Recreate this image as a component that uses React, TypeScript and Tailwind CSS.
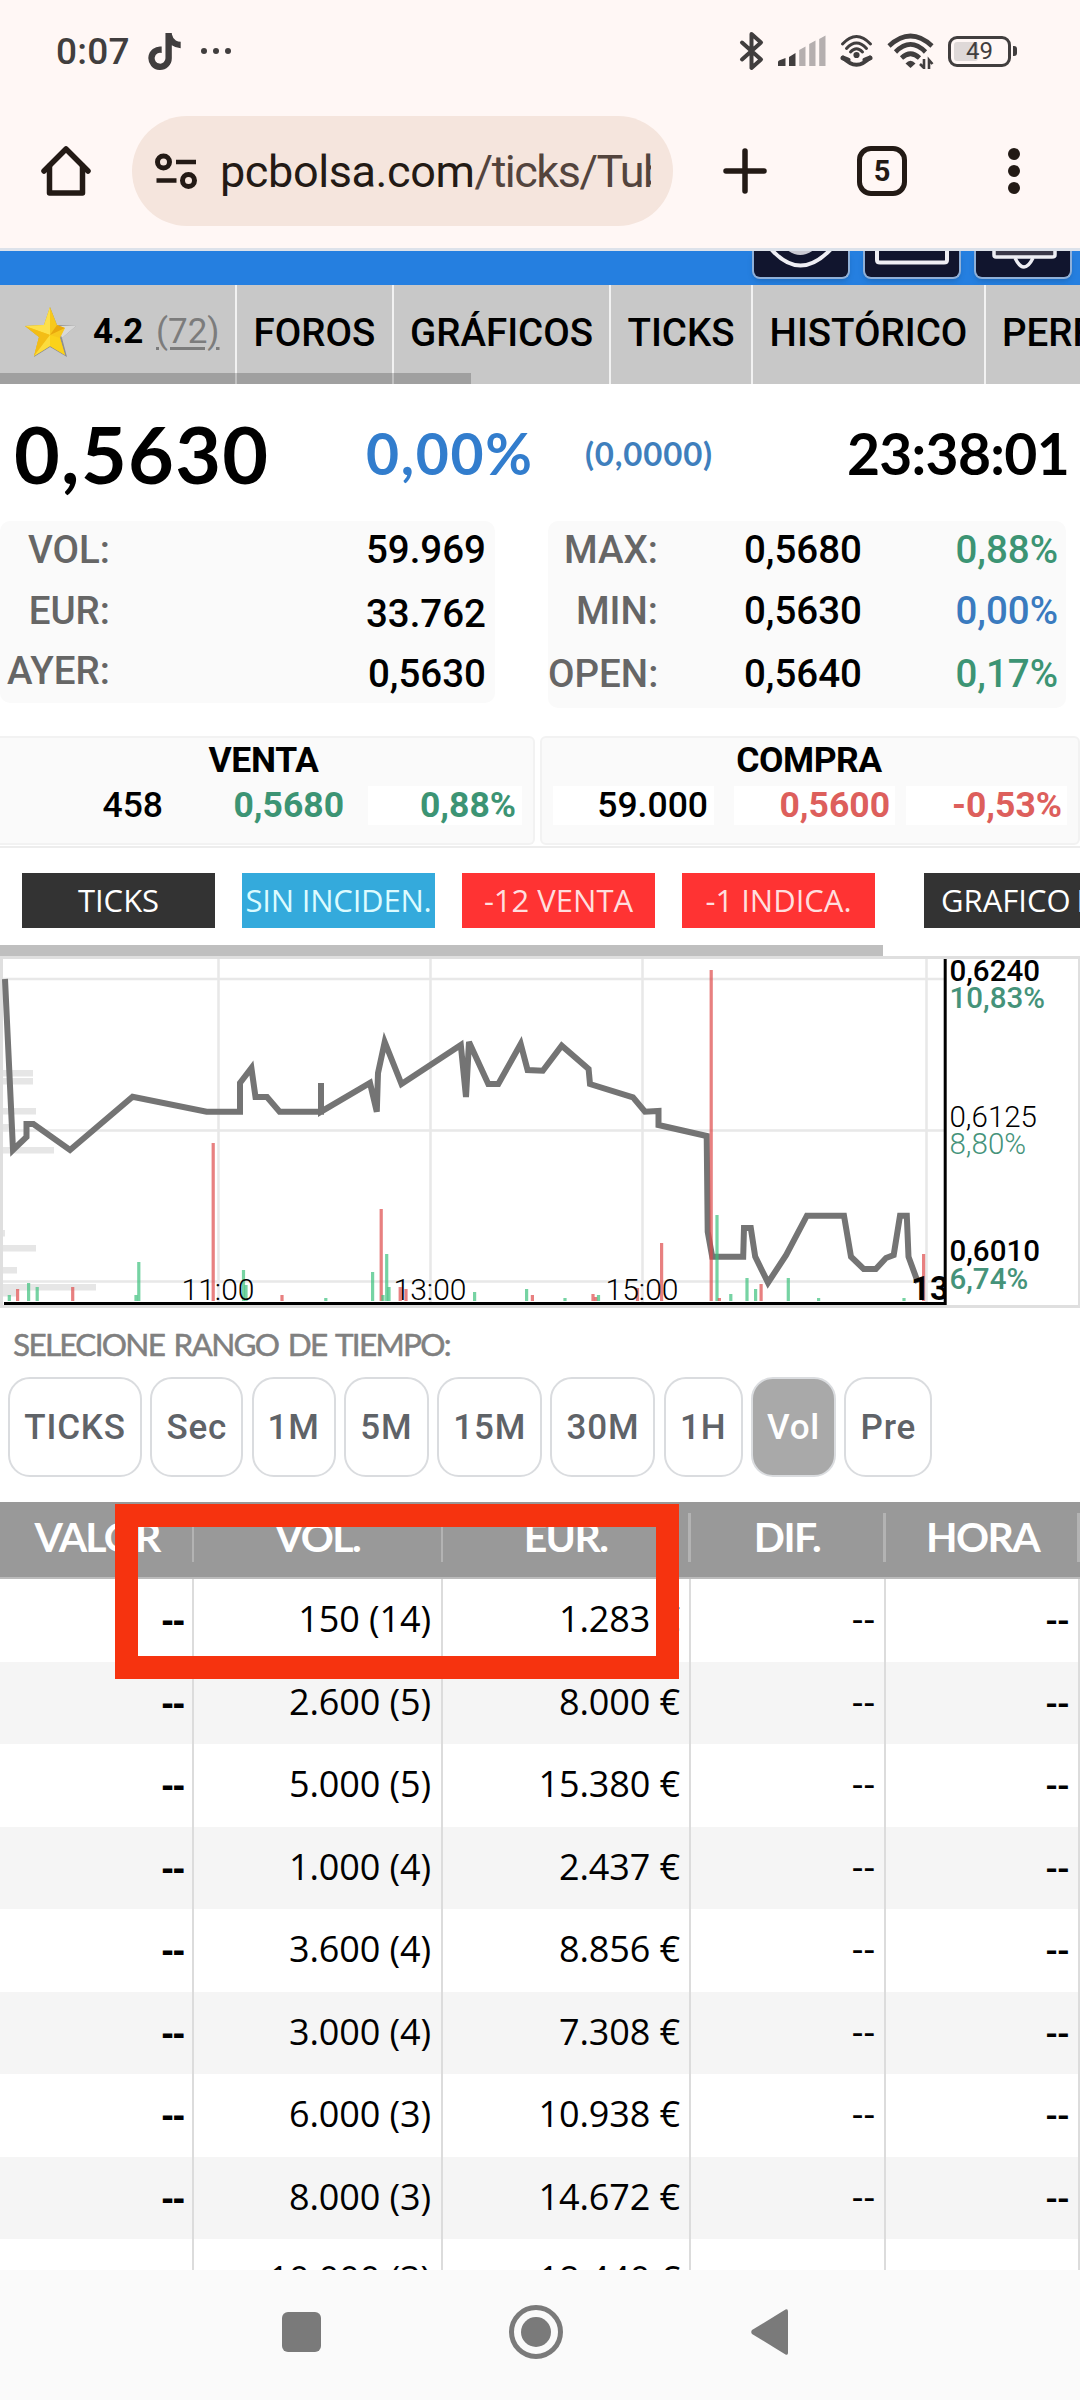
import { FaTiktok } from 'react-icons/fa6';
import clsx from 'clsx';

interface Bar {
  x: number;
  top: number;
  up: boolean;
}

interface QuoteRow {
  vol: string;
  eur: string;
}

const rows: QuoteRow[] = [
  { vol: '150 (14)', eur: '1.283 €' },
  { vol: '2.600 (5)', eur: '8.000 €' },
  { vol: '5.000 (5)', eur: '15.380 €' },
  { vol: '1.000 (4)', eur: '2.437 €' },
  { vol: '3.600 (4)', eur: '8.856 €' },
  { vol: '3.000 (4)', eur: '7.308 €' },
  { vol: '6.000 (3)', eur: '10.938 €' },
  { vol: '8.000 (3)', eur: '14.672 €' },
  { vol: '10.000 (3)', eur: '18.440 €' },
];

const ranges = [
  { label: 'TICKS', width: 'w-[134px]' },
  { label: 'Sec', width: 'w-[93px]' },
  { label: '1M', width: 'w-[84px]' },
  { label: '5M', width: 'w-[85px]' },
  { label: '15M', width: 'w-[105px]' },
  { label: '30M', width: 'w-[105px]' },
  { label: '1H', width: 'w-[79px]' },
  { label: 'Vol', width: 'w-[85px]', active: true },
  { label: 'Pre', width: 'w-[88px]' },
];

// Coordinates are relative to the chart's top-left corner
const pricePoints =
  '5,23 13,194 26.5,181 26.5,168 33.4,168 70,194 132.6,140.7 206.6,155.7 240,155.7 240,127 251.4,112 255.5,141 267,141 279.6,155.7 321,155.7 321,127 321,155.7 370,127 376.8,155.7 378,117 384.7,86 401.5,128 460.8,89 466,141 469,86 488.3,128 498.3,128 520.7,88 527.6,114 542.8,114.7 561.7,89.7 588.6,113 590,128 633,141.3 645,155.7 658.5,155 658.5,169 706.7,180 707.7,275.7 712.2,300.7 743.2,300.7 744,272 750.8,272 755.2,300.7 768,326.7 786.2,299 806.9,259.7 844,259.7 851,300.7 863.7,313 875.8,313 886,302 893.7,299 900,259.7 906.8,259.7 908.5,300.7 918,326.7';

const bars: Bar[] = [
  { x: 9.3, top: 339, up: true },
  { x: 17.6, top: 333, up: false },
  { x: 28.6, top: 327, up: true },
  { x: 37.2, top: 331, up: true },
  { x: 72.7, top: 331, up: false },
  { x: 136, top: 339, up: true },
  { x: 138.8, top: 306, up: true },
  { x: 213.2, top: 187, up: false },
  { x: 243.5, top: 314, up: true },
  { x: 246, top: 329, up: true },
  { x: 282, top: 339, up: false },
  { x: 325.8, top: 342, up: true },
  { x: 372.6, top: 316, up: true },
  { x: 381.2, top: 253, up: false },
  { x: 383, top: 339, up: true },
  { x: 386.7, top: 298, up: true },
  { x: 389, top: 331, up: true },
  { x: 400.2, top: 331, up: false },
  { x: 406, top: 333, up: false },
  { x: 474.6, top: 336, up: true },
  { x: 526.6, top: 333, up: true },
  { x: 532.4, top: 339, up: false },
  { x: 565, top: 342, up: true },
  { x: 593, top: 338, up: false },
  { x: 595.8, top: 341, up: false },
  { x: 598.5, top: 339, up: true },
  { x: 637.5, top: 332, up: false },
  { x: 661.6, top: 287, up: false },
  { x: 711.2, top: 14, up: false },
  { x: 717, top: 259, up: true },
  { x: 719.4, top: 342, up: false },
  { x: 730.8, top: 338, up: true },
  { x: 747, top: 322, up: true },
  { x: 755.6, top: 333, up: true },
  { x: 761.1, top: 328, up: false },
  { x: 788.3, top: 322, up: true },
  { x: 818.6, top: 342, up: true },
  { x: 904, top: 342, up: true },
  { x: 923.6, top: 298, up: false },
];

const volumeProfile = [
  [114, 33],
  [122, 33],
  [152, 36],
  [168, 14],
  [191, 54],
  [274, 5],
  [289, 36],
  [311, 17],
  [328, 96],
  [334, 16],
];

const StatusBar = () => (
  <div className="flex h-[102px] shrink-0 items-center pl-[56px] text-[#413e3e]">
    <span className="text-[37px] leading-[37px] font-medium tracking-[0.2px] w-[92px] pt-px">0:07</span>
    <FaTiktok className="w-[33px] h-[37px]" />
    <div className="ml-[20px] flex gap-[6px]">
      <i className="size-[6px] rounded-full bg-current" />
      <i className="size-[6px] rounded-full bg-current" />
      <i className="size-[6px] rounded-full bg-current" />
    </div>
    <svg className="ml-[508px]" width="26" height="40" viewBox="0 0 26 40" fill="none" stroke="currentColor" strokeWidth="4" strokeLinecap="round" strokeLinejoin="round">
      <path d="M3 11.5 L22 28.5 L12.5 37 V3 L22 11.5 L3 28.5" />
    </svg>
    <svg className="ml-[13px]" width="50" height="32" viewBox="0 0 50 32" fill="currentColor">
      <path d="M0 31 V27 Q0 26 1 25.5 L7.5 23 V31Z" />
      <path d="M11 31 V22 L17.5 18 V31Z" />
      <g fill="#b5afaf">
        <path d="M21.2 31 V15 L27.5 11.5 V31Z" />
        <path d="M31.2 31 V9 L37.5 5.5 V31Z" />
        <path d="M41.2 31 V4 L47.5 0.5 V31Z" />
      </g>
    </svg>
    <svg className="ml-[12px]" width="34" height="34" viewBox="0 0 34 34" fill="none" stroke="currentColor" strokeWidth="3" strokeLinecap="round">
      <path d="M2.5 10 Q16.500 -5 30.500 10" />
      <path d="M6.500 14.500 Q16.500 3.500 26.500 14.500" />
      <path d="M10.500 18 Q16.500 11.500 22.500 18" />
      <circle cx="16.500" cy="21" r="1.600" fill="currentColor" />
      <path d="M3 23.500 Q16.500 38 30 23.500" strokeWidth="4" />
      <path d="M3 24 L8 26 M30 24 L25 26" strokeWidth="5" />
    </svg>
    <svg className="ml-[13px]" width="48" height="36" viewBox="0 0 48 36" fill="none" stroke="currentColor" strokeWidth="4.600">
      <path d="M2 13 Q23.500 -7 45 13" />
      <path d="M8.500 19 Q23.500 4 38.500 19" />
      <path d="M14.500 25 Q23.500 16.500 32.500 25" />
      <path d="M18.500 30.500 Q23.500 25 28.500 30.500 L23.500 35Z" fill="currentColor" stroke="none" />
      <path d="M37 26 V35 L33 31 M42 36 V27 L45.500 31" strokeWidth="2.600" />
    </svg>
    <div className="relative ml-[13px] flex h-[31px] w-[63px] items-center justify-center rounded-[9px] border-[3px] border-current">
      <i className="absolute left-[3px] top-[3px] h-[19px] w-[24px] rounded-[3px] bg-[#dfd9d8]" />
      <span className="relative text-[24px] leading-[24px]">49</span>
    </div>
    <i className="ml-[2px] h-[10px] w-[4px] rounded-r-[3px] bg-current" />
  </div>
);

const BrowserBar = () => (
  <div className="flex h-[146px] shrink-0 items-start pl-[41px] pt-[14px] text-[#231a15]">
    <div className="flex h-[110px] items-center">
      <svg width="50" height="52" viewBox="0 0 50 52" fill="none" stroke="currentColor" strokeWidth="5.500" strokeLinecap="round" strokeLinejoin="round">
        <path d="M3 26 L25 4 L47 26" />
        <path d="M8.500 21 V48 H41.500 V21" />
      </svg>
      <div className="ml-[41px] flex h-[110px] w-[541px] items-center rounded-full bg-[#f5e5dd] pl-[23px] pr-[22px]">
        <svg width="43" height="38" viewBox="0 0 43 38" fill="none" stroke="currentColor" strokeWidth="5">
          <circle cx="8.500" cy="10" r="6" />
          <path d="M21 10 H41 M1.500 28.500 H21.500" strokeWidth="4.500" />
          <circle cx="33.500" cy="28.500" r="6" />
        </svg>
        <div className="ml-[22px] min-w-0 flex-1 overflow-hidden whitespace-nowrap pt-px text-[45px] leading-[60px] tracking-[-1.500px] text-[#53443d]">
          <span className="tracking-[-0.400px] text-[#231a15]">pcbolsa.com</span>/ticks/Tubos
        </div>
      </div>
      <svg className="ml-[50px]" width="44" height="46" viewBox="0 0 44 46" stroke="currentColor" strokeWidth="5.500" strokeLinecap="round">
        <path d="M22 3 V43 M3 23 H41" />
      </svg>
      <div className="ml-[90px] flex size-[50px] items-center justify-center rounded-[14px] border-[5.5px] border-current text-[29px] font-bold leading-none">5</div>
      <div className="ml-[101px] flex flex-col gap-[5px]">
        <i className="size-[12px] rounded-full bg-current" />
        <i className="size-[12px] rounded-full bg-current" />
        <i className="size-[12px] rounded-full bg-current" />
      </div>
    </div>
  </div>
);

const SiteHeader = () => (
  <div className="flex h-[37px] shrink-0 gap-[13px] overflow-hidden border-t-[3px] border-[#dde2ea] bg-[#257fe0] pl-[752px]">
    <div className="h-[28px] w-[98px] shrink-0 rounded-b-[8px] border-2 border-t-0 border-[#8fb0d8] bg-[#11152e] shadow-md">
      <svg width="94" height="26" viewBox="0 0 94 26" fill="none" stroke="#eeeef4" strokeWidth="4">
        <path d="M17 -2 Q46 31 77 -2" />
        <path d="M34 -3 Q46 7 59 -3" stroke="#c9c9d2" strokeWidth="4" />
      </svg>
    </div>
    <div className="h-[28px] w-[98px] shrink-0 rounded-b-[8px] border-2 border-t-0 border-[#8fb0d8] bg-[#11152e] shadow-md">
      <svg width="94" height="26" viewBox="0 0 94 26" fill="none" stroke="#eeeef4" strokeWidth="4">
        <path d="M12 -4 V9 Q12 11.500 15 11.500 H79 Q82 11.500 82 9 V-4" />
      </svg>
    </div>
    <div className="h-[28px] w-[98px] shrink-0 rounded-b-[8px] border-2 border-t-0 border-[#8fb0d8] bg-[#11152e] shadow-md">
      <svg width="94" height="26" viewBox="0 0 94 26" fill="none" stroke="#eeeef4" strokeWidth="3.500">
        <path d="M18 -4 V4 Q18 6 20 6 H76 Q79 6 79 4 V-4" fill="#3a3848" />
        <path d="M39 7 Q48 25 57 7" />
      </svg>
    </div>
  </div>
);

const Star = () => (
  <svg className="ml-[24px]" width="53" height="52" viewBox="0 0 53 52">
    <path d="M26 1 L33 19 L52 20 L38 32 L43 51 L26 41 L10 51 L15 31 L1 20 L20 19Z" fill="#8f8f8f" />
    <path d="M33 20 L52 20 L38 32Z" fill="#d8d8d8" />
    <path d="M26 1 L33 19 L41 22 L36 32 L41 49 L26 40 L10 50 L15 31 L1 20 L20 19Z" fill="#f7c81c" />
    <path d="M26 1 V29 L1 20 L20 19Z" fill="#fde04a" />
    <path d="M26 29 L10 50 L15 31 L1 20Z" fill="#f3bd16" />
    <path d="M26 29 L10 50 L26 40Z" fill="#fcdc3d" />
    <path d="M26 29 L36 32 L41 49 L26 40Z" fill="#fbd21a" />
    <path d="M26 29 L33 19 L41 22Z" fill="#e9a80d" />
  </svg>
);

const SectionTabs = () => (
  <div className="relative flex h-[99px] shrink-0 overflow-hidden bg-[#c8c8c8] text-[38.500px] font-medium leading-[96px] text-black">
    <div className="flex h-full w-[237px] shrink-0 items-center border-r-2 border-[#f2f2f2] pb-[6px] text-[35px]">
      <Star />
      <span className="ml-[16px] w-[63px] font-bold">4.2</span>
      <span className="font-normal text-[#7c7c7c] underline decoration-[2.500px] underline-offset-[4px]">(72)</span>
    </div>
    <div className="w-[157px] shrink-0 border-r-2 border-[#f2f2f2] text-center">FOROS</div>
    <div className="w-[217px] shrink-0 border-r-2 border-[#f2f2f2] text-center">GRÁFICOS</div>
    <div className="w-[142px] shrink-0 border-r-2 border-[#f2f2f2] text-center">TICKS</div>
    <div className="w-[233px] shrink-0 border-r-2 border-[#f2f2f2] text-center">HISTÓRICO</div>
    <div className="shrink-0 pl-[16px]">PERFIL</div>
    <div className="absolute bottom-0 left-0 h-[11px] w-[471px] bg-black/20" />
  </div>
);

const Headline = () => (
  <div className="flex h-[137px] shrink-0 items-center pt-[2px] font-[Lato,sans-serif] font-bold text-black">
    <span className="ml-[14px] w-[352px] text-[79px] leading-[135px] tracking-[1.300px]">0,5630</span>
    <span className="w-[219px] text-[57px] tracking-[1.700px] text-[#327dcd]">0,00%</span>
    <span className="text-[33px] tracking-[0.800px] text-[#3f7fbd]">(0,0000)</span>
    <span className="ml-auto mr-[11px] text-[57px] tracking-[-0.700px]">23:38:01</span>
  </div>
);

const Stats = () => (
  <div className="flex h-[215px] shrink-0 items-start text-[38.500px] font-medium leading-[56px]">
    <div className="flex h-[182px] w-[495px] justify-between rounded-[10px] bg-[#fafafa] pr-[9px] pt-px text-right">
      <div className="w-[110px] text-[#666]">
        <p>VOL:</p>
        <p className="mt-[5px]">EUR:</p>
        <p className="mt-[4px] -ml-4">AYER:</p>
      </div>
      <div className="text-black">
        <p>59.969</p>
        <p className="mt-[8px]">33.762</p>
        <p className="mt-[4px]">0,5630</p>
      </div>
    </div>
    <div className="ml-[53px] flex h-[187px] w-[518px] rounded-[10px] bg-[#fafafa] pt-px text-right">
      <div className="w-[110px] text-[#666]">
        <p>MAX:</p>
        <p className="mt-[5px]">MIN:</p>
        <p className="mt-[7px]">OPEN:</p>
      </div>
      <div className="w-[204px] text-black">
        <p>0,5680</p>
        <p className="mt-[5px]">0,5630</p>
        <p className="mt-[7px]">0,5640</p>
      </div>
      <div className="w-[196px] text-[#3c9474]">
        <p>0,88%</p>
        <p className="mt-[5px] text-[#3a7bbf]">0,00%</p>
        <p className="mt-[7px]">0,17%</p>
      </div>
    </div>
  </div>
);

const OrderBook = () => (
  <div className="flex h-[112px] shrink-0 gap-[5px] border-b-2 border-[#ededed] pb-px text-[35.500px] text-black">
    <div className="w-[535px] rounded-r-[6px] border-2 border-l-0 border-[#f2f2f2] bg-[#fafafa]">
      <p className="pr-[6px] text-center font-bold leading-[45px] tracking-[-0.300px]">VENTA</p>
      <div className="mt-[3px] flex justify-end gap-[17px] pr-[11px] text-right leading-[39px]">
        <span className="w-[161px] pr-[5px] font-medium">458</span>
        <span className="w-[166px] pr-[7px] font-bold text-[#3c9474]">0,5680</span>
        <span className="w-[154px] bg-white pr-[6px] font-bold text-[#3c9474]">0,88%</span>
      </div>
    </div>
    <div className="w-[540px] rounded-[6px] border-2 border-[#f2f2f2] bg-[#fafafa]">
      <p className="pr-[2px] text-center font-bold leading-[45px] tracking-[-0.500px]">COMPRA</p>
      <div className="mt-[3px] flex pl-[11px] text-right leading-[39px]">
        <span className="w-[161px] bg-white pr-[6px] font-medium">59.000</span>
        <span className="ml-[20px] w-[161px] bg-white pr-[5px] font-bold text-[#dd5f5c]">0,5600</span>
        <span className="ml-[11px] w-[161px] bg-white pr-[5px] font-bold text-[#dd5f5c]">-0,53%</span>
      </div>
    </div>
  </div>
);

const Signals = () => (
  <div className="flex h-[108px] shrink-0 flex-col justify-between overflow-hidden pt-[25px] font-['Open_Sans',sans-serif] text-[31px] leading-[55px] text-white">
    <div className="flex shrink-0 gap-[27px] whitespace-nowrap pl-[22px] text-center">
      <div className="h-[55px] w-[193px] shrink-0 bg-[#333]">TICKS</div>
      <div className="h-[55px] w-[193px] shrink-0 bg-[#34aadc] tracking-[-0.200px] text-[#dcfbff]">SIN INCIDEN.</div>
      <div className="h-[55px] w-[193px] shrink-0 bg-[#ff3333] text-[#ffdede]">-12 VENTA</div>
      <div className="h-[55px] w-[193px] shrink-0 bg-[#ff3333] text-[#ffdede]">-1 INDICA.</div>
      <div className="ml-[22px] h-[55px] w-[230px] shrink-0 bg-[#333] pl-[17px] text-left [word-spacing:-2px]">GRAFICO IND</div>
    </div>
    <div className="h-[11px] w-[883px] bg-[#bfbfbf]" />
  </div>
);

const Chart = () => (
  <div className="relative h-[352px] shrink-0 border-[3px] border-r-2 border-[#dfdfdf]">
    <svg className="absolute -left-[3px] -top-[3px]" width="1080" height="352" viewBox="0 0 1080 352" fontFamily="Roboto, sans-serif">
      <g fill="#e6e6e6">
        {volumeProfile.map(([y, end]) => (
          <rect key={y} x="3" y={y} width={end - 3} height="6.500" />
        ))}
      </g>
      <path d="M3 23 H944 M3 174.500 H944 M3 325.500 H944 M218.500 3 V346 M430.500 3 V346 M642.500 3 V346 M926.500 3 V346" stroke="#e8e8e8" strokeWidth="2.500" />
      <polyline points={pricePoints} fill="none" stroke="#747474" strokeWidth="6" />
      {bars.map((bar, i) => (
        <rect key={i} x={bar.x - 1.6} y={bar.top} width="3.200" height={345 - bar.top} fill={bar.up ? '#3cc07c' : '#de4a4a'} opacity="0.700" />
      ))}
      <path d="M4 347.500 H945 M945.200 3 V349" stroke="#000" strokeWidth="3" />
      <g fontSize="30" fontWeight="300">
        <text x="218" y="344" textAnchor="middle">11:00</text>
        <text x="430" y="344" textAnchor="middle">13:00</text>
        <text x="642" y="344" textAnchor="middle">15:00</text>
      </g>
      <svg width="945" height="352">
        <text x="911" y="344" fontSize="33" fontWeight="700">13:38</text>
      </svg>
      <g fontSize="29.500" fontWeight="500">
        <text x="949.500" y="25">0,6240</text>
        <text x="949.500" y="52" fill="#45937a">10,83%</text>
        <text x="949.500" y="171" fontWeight="300">0,6125</text>
        <text x="949.500" y="198" fontWeight="300" fill="#45937a">8,80%</text>
        <text x="949.500" y="305">0,6010</text>
        <text x="949.500" y="333" fill="#45937a">6,74%</text>
      </g>
    </svg>
  </div>
);

const RangePicker = () => (
  <div className="h-[194px] shrink-0">
    <p className="h-[69px] whitespace-nowrap pl-[13px] pt-[8px] font-[Lato,sans-serif] text-[31.500px] leading-[57px] tracking-[-1.700px] text-[#808080] [-webkit-text-stroke:0.5px_#808080] [word-spacing:3px]">
      SELECIONE RANGO DE TIEMPO:
    </p>
    <div className="flex gap-[8.3px] pl-[8px]">
      {ranges.map((range) => (
        <button
          key={range.label}
          className={clsx(
            'h-[100px] shrink-0 rounded-[22px] border-2 border-[#dadcdf] text-[35px] font-medium leading-[97px] tracking-[0.800px]',
            range.width,
            range.active ? 'bg-[#a9a9a9] text-white' : 'bg-white text-[#5f6368]'
          )}
        >
          {range.label}
        </button>
      ))}
    </div>
  </div>
);

const TicksTable = () => (
  <div className="relative flex h-[768px] shrink-0 flex-col">
    <div className="flex h-[77px] shrink-0 border-b-2 border-[#bbb] bg-[#999] pt-[11px] text-center font-[Lato,sans-serif] text-[41px] font-bold leading-[48px] tracking-[-1.600px] text-white">
      <div className="h-[49px] w-[194px] border-r-2 border-[#b3b3b3] pl-[2px] tracking-[-1.900px]">VALOR</div>
      <div className="h-[49px] w-[249px] border-r-2 border-[#b3b3b3]">VOL.</div>
      <div className="h-[49px] w-[248px] border-r-[3px] border-[#b3b3b3]">EUR.</div>
      <div className="h-[49px] w-[195px] border-r-[3px] border-[#b3b3b3]">DIF.</div>
      <div className="h-[49px] w-[194px] border-r-[3px] border-[#b3b3b3] pl-[2px] tracking-[-1.600px]">HORA</div>
    </div>
    <div className="min-h-0 flex-1 overflow-hidden font-['Open_Sans',sans-serif] text-[36px] leading-[80px] text-black">
      {rows.map((row) => (
        <div key={row.vol} className="flex h-[82.5px] bg-white text-right even:bg-[#f5f5f5]">
          <div className="w-[194px] border-r-2 border-[#dcdcdc] pr-[8px] font-bold tracking-[-0.500px]">--</div>
          <div className="w-[249px] border-r-2 border-[#dcdcdc] pr-[10px] tracking-[-0.100px]">{row.vol}</div>
          <div className="w-[248px] border-r-2 border-[#dcdcdc] pr-[9px] tracking-[-0.100px]">{row.eur}</div>
          <div className="w-[195px] border-r-2 border-[#dcdcdc] pr-[9px]">--</div>
          <div className="w-[194px] border-r-2 border-[#dcdcdc] pr-[9px] font-semibold">--</div>
        </div>
      ))}
    </div>
    {/* Hand-drawn highlight over the first row */}
    <div className="absolute left-[115px] top-[2px] h-[175px] w-[564px] border-[23px] border-[#f6330f]" />
  </div>
);

const NavBar = () => (
  <div className="flex flex-1 items-start bg-[#fafafa] pt-[34px]">
    <svg className="ml-[281px]" width="510" height="56" viewBox="0 0 510 56" fill="#7a7a7a">
      <rect x="1" y="8" width="39" height="40" rx="6" />
      <circle cx="255" cy="28" r="24.500" fill="none" stroke="#7a7a7a" strokeWidth="5" />
      <circle cx="255" cy="28" r="15" />
      <path d="M471 26 L504.500 5.500 Q507 4.500 507 7.500 V49 Q507 51.500 504.500 50.500 L471 30 Q469.500 28 471 26Z" />
    </svg>
  </div>
);

export default function App() {
  return (
    <div className="flex h-[2400px] w-[1080px] flex-col overflow-hidden bg-white font-[Roboto,sans-serif]">
      <div className="bg-[#fff7f5]">
        <StatusBar />
        <BrowserBar />
      </div>
      <SiteHeader />
      <SectionTabs />
      <Headline />
      <Stats />
      <OrderBook />
      <Signals />
      <Chart />
      <RangePicker />
      <TicksTable />
      <NavBar />
    </div>
  );
}
